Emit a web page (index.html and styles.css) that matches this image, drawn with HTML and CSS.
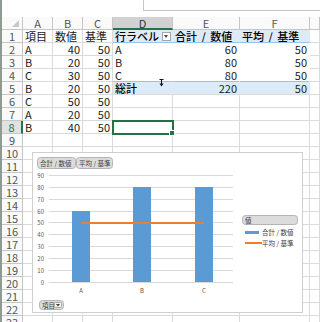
FILE: index.html
```html
<!DOCTYPE html>
<html lang="ja">
<head>
    <meta charset="UTF-8">
    <meta name="viewport" content="width=device-width, initial-scale=1.0">
    <title>ピボットグラフ</title>
    <link rel="stylesheet" href="styles.css">
</head>
<body>
    <div class="window">
        <div class="formula-area"><div class="formula-box"></div></div>

        <div class="sheet">
            <div class="row">
                <div class="corner"><span class="tri"></span></div>
                <div class="ch">A</div>
                <div class="ch">B</div>
                <div class="ch">C</div>
                <div class="ch sel">D</div>
                <div class="ch">E</div>
                <div class="ch">F</div>
                <div class="ch"></div>
            </div>

            <div class="row">
                <div class="rh">1</div>
                <div>項目</div>
                <div>数値</div>
                <div>基準</div>
                <div class="pv-head pv-label">行ラベル<span class="filter-btn"></span></div>
                <div class="pv-head pv-title">合計 / 数値</div>
                <div class="pv-head pv-title">平均 / 基準</div>
                <div></div>
            </div>
            <div class="row">
                <div class="rh">2</div>
                <div>A</div>
                <div class="num">40</div>
                <div class="num">50</div>
                <div class="pv-body">A</div>
                <div class="pv-body num">60</div>
                <div class="pv-body num">50</div>
                <div></div>
            </div>
            <div class="row">
                <div class="rh">3</div>
                <div>B</div>
                <div class="num">20</div>
                <div class="num">50</div>
                <div class="pv-body">B</div>
                <div class="pv-body num">80</div>
                <div class="pv-body num">50</div>
                <div></div>
            </div>
            <div class="row">
                <div class="rh">4</div>
                <div>C</div>
                <div class="num">30</div>
                <div class="num">50</div>
                <div class="pv-body pv-last">C</div>
                <div class="pv-body pv-last num">80</div>
                <div class="pv-body pv-last num">50</div>
                <div></div>
            </div>
            <div class="row">
                <div class="rh">5</div>
                <div>B</div>
                <div class="num">20</div>
                <div class="num">50</div>
                <div class="pv-total pv-strong">総計</div>
                <div class="pv-total num">220</div>
                <div class="pv-total num">50</div>
                <div></div>
            </div>
            <div class="row">
                <div class="rh">6</div>
                <div>C</div>
                <div class="num">50</div>
                <div class="num">50</div>
                <div></div><div></div><div></div><div></div>
            </div>
            <div class="row">
                <div class="rh">7</div>
                <div>A</div>
                <div class="num">20</div>
                <div class="num">50</div>
                <div></div><div></div><div></div><div></div>
            </div>
            <div class="row">
                <div class="rh sel">8</div>
                <div>B</div>
                <div class="num">40</div>
                <div class="num">50</div>
                <div class="active"></div><div></div><div></div><div></div>
            </div>
            <div class="row"><div class="rh">9</div><div></div><div></div><div></div><div></div><div></div><div></div><div></div></div>
            <div class="row"><div class="rh">10</div><div></div><div></div><div></div><div></div><div></div><div></div><div></div></div>
            <div class="row"><div class="rh">11</div><div></div><div></div><div></div><div></div><div></div><div></div><div></div></div>
            <div class="row"><div class="rh">12</div><div></div><div></div><div></div><div></div><div></div><div></div><div></div></div>
            <div class="row"><div class="rh">13</div><div></div><div></div><div></div><div></div><div></div><div></div><div></div></div>
            <div class="row"><div class="rh">14</div><div></div><div></div><div></div><div></div><div></div><div></div><div></div></div>
            <div class="row"><div class="rh">15</div><div></div><div></div><div></div><div></div><div></div><div></div><div></div></div>
            <div class="row"><div class="rh">16</div><div></div><div></div><div></div><div></div><div></div><div></div><div></div></div>
            <div class="row"><div class="rh">17</div><div></div><div></div><div></div><div></div><div></div><div></div><div></div></div>
            <div class="row"><div class="rh">18</div><div></div><div></div><div></div><div></div><div></div><div></div><div></div></div>
            <div class="row"><div class="rh">19</div><div></div><div></div><div></div><div></div><div></div><div></div><div></div></div>
            <div class="row"><div class="rh">20</div><div></div><div></div><div></div><div></div><div></div><div></div><div></div></div>
            <div class="row"><div class="rh">21</div><div></div><div></div><div></div><div></div><div></div><div></div><div></div></div>
            <div class="row"><div class="rh">22</div><div></div><div></div><div></div><div></div><div></div><div></div><div></div></div>
            <div class="row"><div class="rh">23</div><div></div><div></div><div></div><div></div><div></div><div></div><div></div></div>
        </div>

        <!-- mouse cursor over the pivot table -->
        <svg class="cursor" width="5" height="8" viewBox="0 0 5 8">
            <rect x="0.5" y="0" width="4" height="1" fill="#111"/>
            <rect x="2" y="1" width="1" height="4" fill="#111"/>
            <polygon points="0.5,4.5 4.5,4.5 2.5,7.5" fill="#111"/>
        </svg>

        <!-- pivot chart -->
        <div class="chart">
            <svg width="269" height="159" viewBox="33 153 269 159">
                <rect class="field-btn" x="37.5" y="157.5" width="38" height="11" rx="3"/>
                <text x="40" y="165.5">合計 / 数値</text>
                <rect class="field-btn" x="76.5" y="157.5" width="36" height="11" rx="3"/>
                <text x="79" y="165.5">平均 / 基準</text>

                <g class="grid">
                    <line x1="49" x2="233" y1="175.5" y2="175.5"/>
                    <line x1="49" x2="233" y1="187.5" y2="187.5"/>
                    <line x1="49" x2="233" y1="199.5" y2="199.5"/>
                    <line x1="49" x2="233" y1="211.5" y2="211.5"/>
                    <line x1="49" x2="233" y1="222.5" y2="222.5"/>
                    <line x1="49" x2="233" y1="234.5" y2="234.5"/>
                    <line x1="49" x2="233" y1="246.5" y2="246.5"/>
                    <line x1="49" x2="233" y1="258.5" y2="258.5"/>
                    <line x1="49" x2="233" y1="270.5" y2="270.5"/>
                    <line x1="49" x2="233" y1="282.5" y2="282.5"/>
                </g>

                <g class="axis" text-anchor="end">
                    <text x="44" y="177.5">90</text>
                    <text x="44" y="189.5">80</text>
                    <text x="44" y="201.5">70</text>
                    <text x="44" y="213.5">60</text>
                    <text x="44" y="224.5">50</text>
                    <text x="44" y="236.5">40</text>
                    <text x="44" y="248.5">30</text>
                    <text x="44" y="260.5">20</text>
                    <text x="44" y="272.5">10</text>
                    <text x="44" y="284.5">0</text>
                </g>

                <g fill="#5b9bd5">
                    <rect x="72" y="211" width="18" height="71"/>
                    <rect x="133" y="187" width="18" height="95"/>
                    <rect x="195" y="187" width="18" height="95"/>
                </g>
                <line x1="81" x2="204" y1="223" y2="223" stroke="#ed7d31" stroke-width="2"/>

                <g class="axis" text-anchor="middle">
                    <text x="81" y="293">A</text>
                    <text x="142" y="293">B</text>
                    <text x="204" y="293">C</text>
                </g>

                <rect class="field-btn" x="242.5" y="215.5" width="55" height="9" rx="3"/>
                <text x="245" y="222.5">値</text>
                <rect x="245" y="231" width="14" height="3" fill="#5b9bd5"/>
                <text x="262" y="234.5">合計 / 数値</text>
                <line x1="245" x2="262" y1="243" y2="243" stroke="#ed7d31" stroke-width="2"/>
                <text x="262" y="245.5">平均 / 基準</text>

                <rect class="field-btn" x="39.5" y="300.5" width="24" height="9" rx="3"/>
                <text x="42" y="307.5">項目</text>
                <rect x="54.5" y="302.5" width="7" height="5" rx="1" fill="#f2f2f2" stroke="#a6a6a6"/>
                <polygon points="56,304 60,304 58,306.5" fill="#404040"/>
            </svg>
        </div>
    </div>
</body>
</html>
```

FILE: styles.css
```css
:root {
    --grid-color: #dadada;
    --head-color: #c6c6c6;
    --excel-green: #217346;
    --pivot-fill: #ddebf7;
    --pivot-line: #9bc2e6;
    --text-color: #1a1a1a;
}

body {
    margin: 0;
    background-color: #fff;
    font-family: "Noto Sans CJK JP", "Noto Sans", sans-serif;
    color: var(--text-color);
    overflow: hidden;
}

.window {
    position: relative;
    height: 322px;
    overflow: hidden;
    border-left: 2px solid #8e9a92;
}

.formula-area {
    height: 17px;
}

.formula-box {
    margin-left: 141px;
    height: 11px;
    box-sizing: border-box;
    border-left: 1px solid var(--head-color);
    border-bottom: 1px solid var(--head-color);
}

.row {
    display: grid;
    grid-template-columns: 21px 30px 30px 30px 60px 67px 70px 1fr;
    height: 13px;
}

.row > div {
    box-sizing: border-box;
    border-right: 1px solid var(--grid-color);
    border-bottom: 1px solid var(--grid-color);
    padding: 0 2px;
    font-size: 11px;
    line-height: 12px;
    white-space: nowrap;
    overflow: hidden;
}

.row > .corner,
.row > .ch,
.row > .rh {
    background-color: #fafafa;
    color: #555;
    border-color: var(--head-color);
}

.row > .ch {
    text-align: center;
}

.row > .rh {
    text-align: center;
    padding: 0;
}

.corner {
    display: flex;
    justify-content: flex-end;
    align-items: flex-end;
}

.tri {
    width: 0;
    height: 0;
    margin: 0 1px 2px 0;
    border-style: solid;
    border-width: 0 0 7px 7px;
    border-color: transparent transparent #c8c8c8 transparent;
}

.row > .ch.sel {
    background-color: #d2d2d2;
    color: #333;
    border-bottom: 2px solid var(--excel-green);
}

.row > .rh.sel {
    background-color: #e1e1e1;
    color: var(--excel-green);
    border-right: 2px solid var(--excel-green);
}

.row > .num {
    text-align: right;
}

.row > .pv-head {
    background-color: var(--pivot-fill);
    border-right-color: var(--pivot-fill);
    border-bottom-color: var(--pivot-line);
    font-weight: 500;
    color: #000;
}

.pv-label {
    display: flex;
    justify-content: space-between;
    align-items: center;
}

.pv-title {
    word-spacing: 2px;
}

.filter-btn {
    position: relative;
    width: 7px;
    height: 7px;
    margin-right: -1px;
    border: 1px solid #a6a6a6;
    background-color: #fff;
}

.filter-btn::after {
    content: "";
    position: absolute;
    left: 1px;
    top: 2px;
    border-style: solid;
    border-width: 3px 2.5px 0 2.5px;
    border-color: #444 transparent transparent transparent;
}

.row > .pv-body {
    background-color: #fff;
    border-color: #fff;
}

.row > .pv-last {
    border-bottom-color: var(--pivot-line);
}

.row > .pv-total {
    background-color: var(--pivot-fill);
    border-right-color: var(--pivot-fill);
}

.row > .pv-strong {
    font-weight: 500;
    color: #000;
}

.row > .active {
    position: relative;
    overflow: visible;
    outline: 2px solid var(--excel-green);
    outline-offset: -1px;
}

.active::after {
    content: "";
    position: absolute;
    right: -3px;
    bottom: -3px;
    width: 4px;
    height: 4px;
    background-color: var(--excel-green);
    border: 1px solid #fff;
}

.cursor {
    position: absolute;
    left: 157px;
    top: 79px;
}

.chart {
    position: absolute;
    left: 30px;
    top: 152px;
    width: 271px;
    height: 161px;
    box-sizing: border-box;
    border: 1px solid #cfcfcf;
    background-color: #fff;
}

.chart svg {
    display: block;
}

.chart text {
    font-family: "Noto Sans CJK JP", "Noto Sans", sans-serif;
    font-size: 6.5px;
    fill: #404040;
}

.chart .axis text {
    font-size: 6px;
    fill: #595959;
}

.field-btn {
    fill: #dcdcdc;
    stroke: #b4b4b4;
    stroke-width: 1;
}

.grid line {
    stroke: #d9d9d9;
    stroke-width: 1;
}
```
